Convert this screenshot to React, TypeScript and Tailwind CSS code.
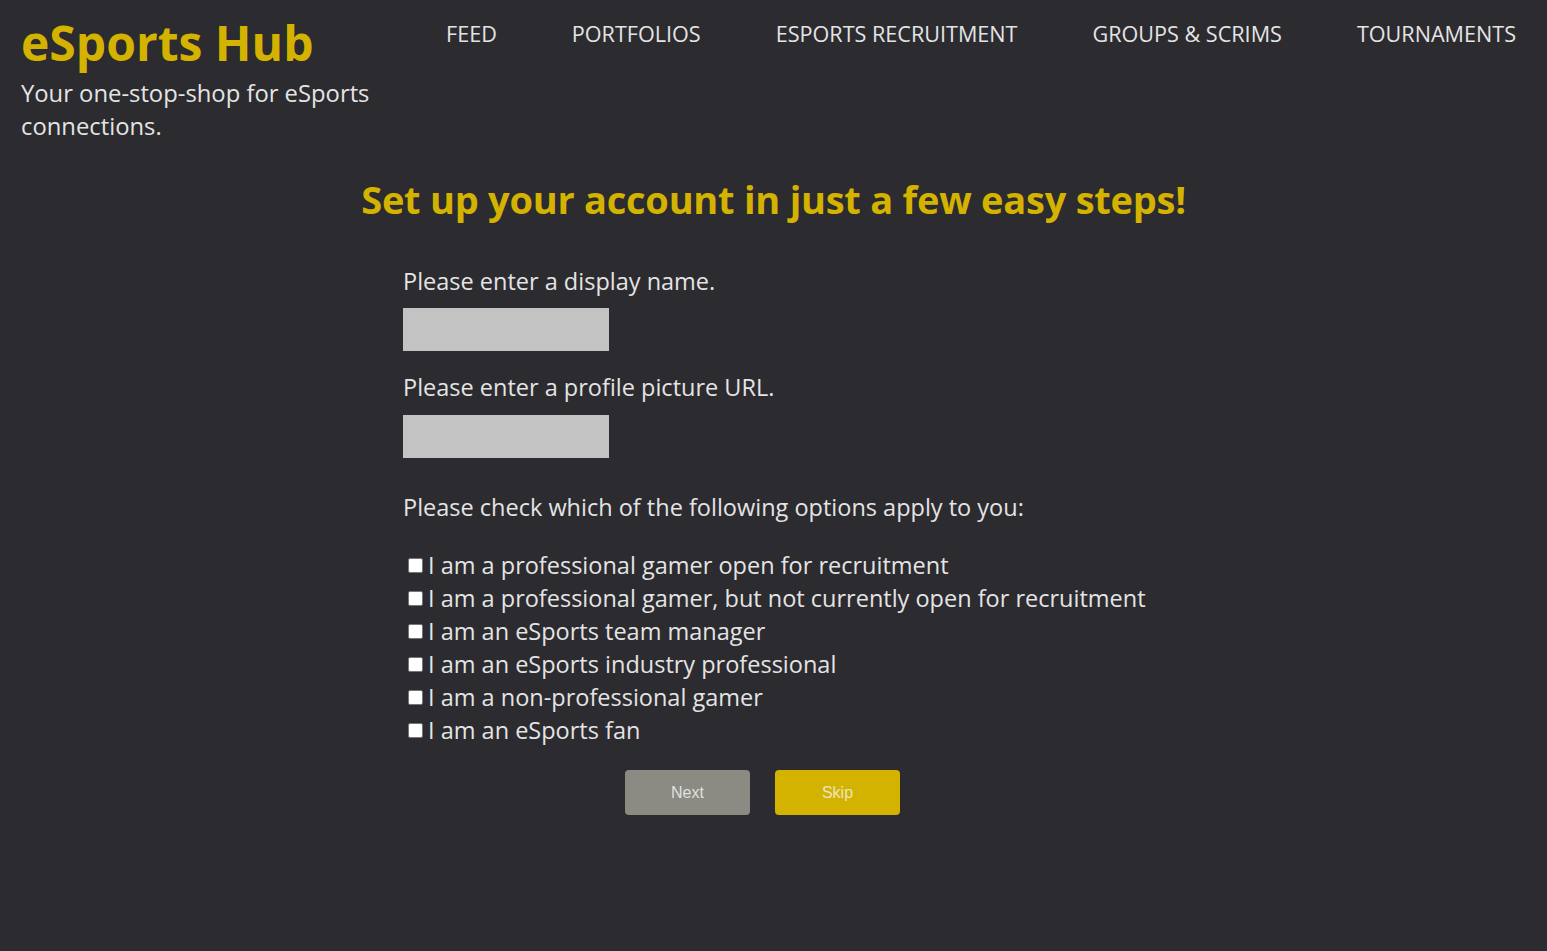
import React from "react";

const options = [
  "I am a professional gamer open for recruitment",
  "I am a professional gamer, but not currently open for recruitment",
  "I am an eSports team manager",
  "I am an eSports industry professional",
  "I am a non-professional gamer",
  "I am an eSports fan",
];

const navItems = ["FEED", "PORTFOLIOS", "ESPORTS RECRUITMENT", "GROUPS & SCRIMS", "TOURNAMENTS"];

export default function App() {
  return (
    <div className="min-h-screen w-full bg-[#2c2b30] text-[#e4e4e4] font-['Open_Sans',sans-serif]">
      <header className="flex items-start justify-between pl-[21px] pr-[31px] pt-[15px]">
        <div className="w-[375px]">
          <h1 className="text-[48px] font-bold leading-[56px] text-[#d4b300]">eSports Hub</h1>
          <p className="mt-[6px] text-[23.8px] leading-[33px]">Your one-stop-shop for eSports connections.</p>
        </div>
        <nav className="flex gap-[75px] pt-[4px] text-[21.6px] leading-[30px]">
          {navItems.map((n) => (
            <a key={n} className="cursor-pointer whitespace-nowrap">{n}</a>
          ))}
        </nav>
      </header>
      <main className="flex flex-col items-center">
        <h2 className="mt-[31px] text-[38px] font-bold leading-[50px] text-[#d4b300] tracking-[-0.25px]">
          Set up your account in just a few easy steps!
        </h2>
        <form className="mt-[41px] w-[741px] text-[23.5px] leading-[33px]">
          <label className="block">Please enter a display name.</label>
          <input type="text" className="mt-[10px] block h-[43px] w-[206px] bg-[#c3c3c3] outline-none" />
          <label className="mt-[20px] block">Please enter a profile picture URL.</label>
          <input type="text" className="mt-[11px] block h-[43px] w-[206px] bg-[#c3c3c3] outline-none" />
          <p className="mt-[33px]">Please check which of the following options apply to you:</p>
          <div className="mt-[25px] flex flex-col">
            {options.map((o) => (
              <label key={o} className="flex items-center h-[33px] whitespace-nowrap">
                <span className="ml-[5px] mr-[5px] inline-block h-[15px] w-[15px] shrink-0 rounded-[2px] bg-white border border-[#767676]" />
                <span>{o}</span>
              </label>
            ))}
          </div>
          <div className="mt-[23px] flex gap-[25px] pl-[222px] font-['Liberation_Sans',Arial,sans-serif]">
            <button type="button" className="h-[45px] w-[125px] rounded-[4px] bg-[#8b8a83] text-[16px] text-[#e0e0e0]">Next</button>
            <button type="button" className="h-[45px] w-[125px] rounded-[4px] bg-[#d4b300] text-[16px] text-[#ece4c0]">Skip</button>
          </div>
        </form>
      </main>
    </div>
  );
}
